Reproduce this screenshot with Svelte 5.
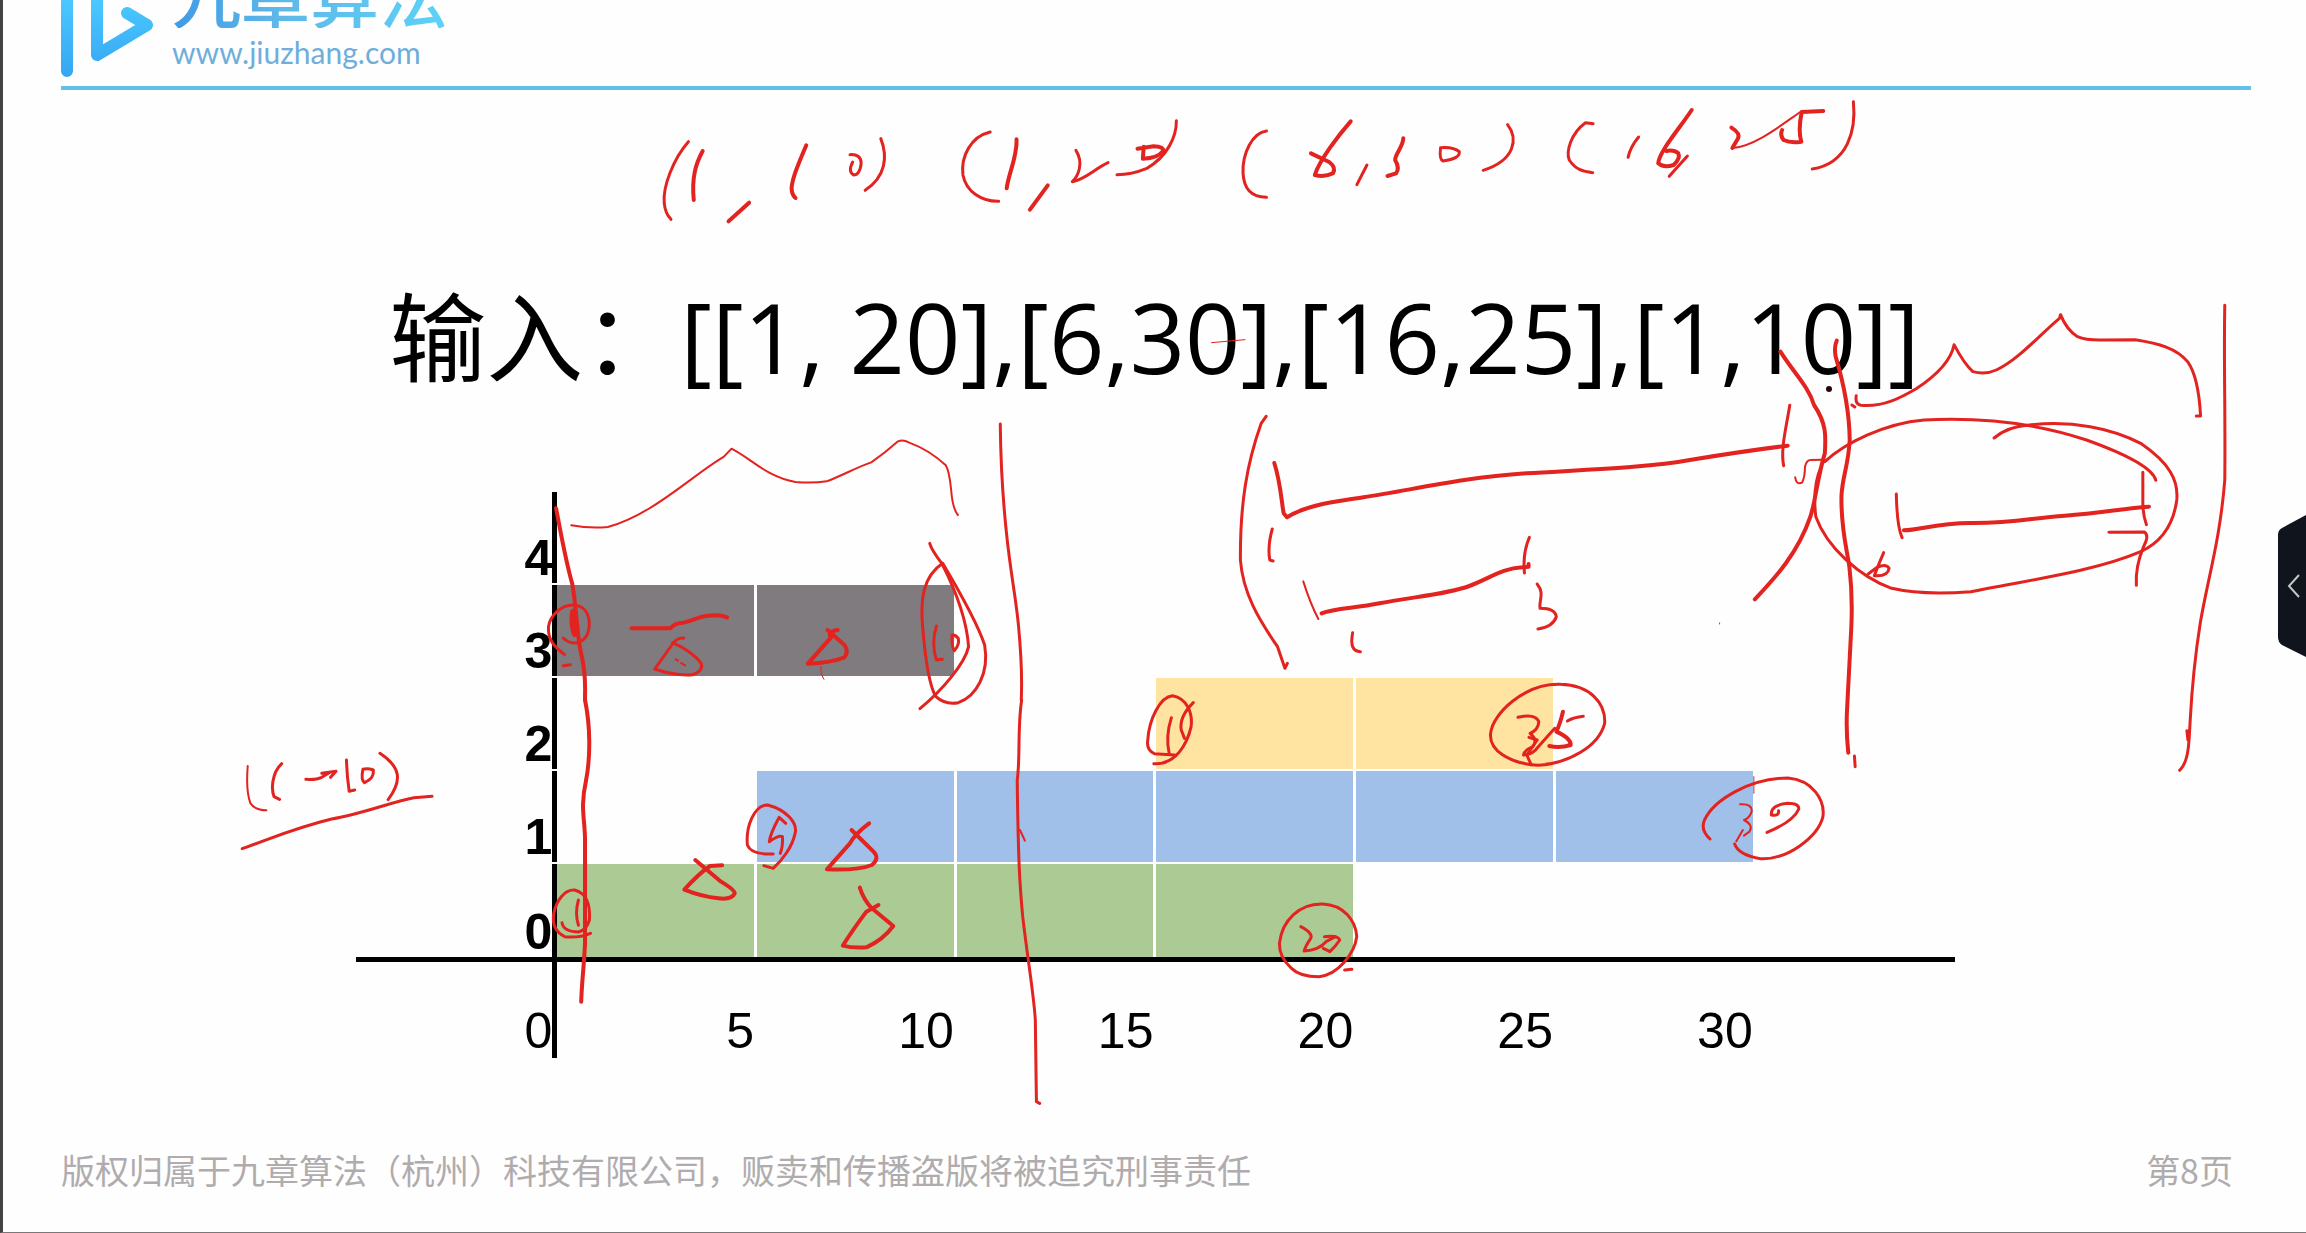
<script>
  const ticks = [5, 10, 15, 20, 25, 30];
  const rows = [
    { label: 4, from: 0, to: 0, tone: 'none' },
    { label: 3, from: 0, to: 10, tone: 'gray' },
    { label: 2, from: 15, to: 25, tone: 'yellow' },
    { label: 1, from: 5, to: 30, tone: 'blue' },
    { label: 0, from: 0, to: 20, tone: 'green' }
  ];
  const toneOf = (row, tick) => (tick > row.from && tick <= row.to ? row.tone : 'none');

  // Pen strokes, grouped by area; each group has its own local coordinate frame.
  const ink = [
    {
      frame: 'translate(600 80) scale(.44643 .33333)',
      strokes: [
        ['M198 185C165 235 140 320 144 370Q146 400 159 418', 3],
        ['M230 213C215 250 205 290 210 360', 4],
        ['M334 368L288 424', 4],
        ['M462 196C445 250 425 310 430 335Q432 348 438 354', 4],
        ['M560 224Q585 222 585 250Q582 285 568 285Q555 275 566 246', 3],
        ['M629 176C645 230 640 290 594 331', 3],
        ['M874 156C830 170 808 230 813 285C820 335 855 365 893 364', 3],
        ['M933 178C935 230 915 280 911 325', 4],
        ['M1003 316L963 389', 4],
        ['M1066 211C1085 250 1070 290 1058 305C1085 300 1110 265 1138 248', 3],
        ['M1204 206L1240 199Q1262 200 1262 212Q1250 235 1216 236L1218 200', 4],
        ['M1291 122C1292 170 1270 230 1225 265Q1190 284 1158 284', 3],
        ['M1370 788L1445 779', 1]
      ]
    },
    {
      frame: 'translate(1200 80) scale(.47832 .33333)',
      strokes: [
        ['M139 153C110 158 88 220 90 280C92 325 105 350 139 352', 3],
        ['M315 124C290 165 250 240 240 285Q260 293 278 280Q285 262 270 246L232 220', 4],
        ['M349 255L328 314', 3],
        ['M425 175C425 200 408 220 408 240Q418 265 410 280L392 288', 4],
        ['M503 203Q500 240 508 243Q545 235 542 215Q530 200 503 203', 3],
        ['M643 134C665 175 660 240 592 271', 3],
        ['M822 131L806 128C775 160 765 215 772 240C785 268 800 275 821 278', 3],
        ['M917 171Q900 200 895 232', 3],
        ['M1028 90C1000 150 960 215 958 250Q970 265 990 255Q1005 235 1000 220Q990 208 975 213', 4],
        ['M1019 228L981 289', 3],
        ['M1111 143Q1130 160 1125 175L1113 204', 4],
        ['M1113 204C1160 200 1220 130 1258 93', 2],
        ['M1303 93L1258 96Q1250 150 1257 185Q1235 190 1220 180Q1212 165 1217 150', 4],
        ['M1366 65C1372 150 1355 250 1280 267', 3]
      ]
    },
    {
      frame: 'translate(340 400) scale(.44643 .33333)',
      strokes: [
        ['M518 376Q560 386 600 381C700 345 790 225 860 170L877 146C920 175 955 230 1020 246Q1060 250 1090 244C1120 230 1160 200 1190 187Q1220 160 1250 124Q1262 118 1275 128Q1320 150 1357 196Q1365 215 1369 270Q1372 325 1384 345', 2],
        ['M484 325C495 400 505 480 520 550C530 620 530 700 540 760C553 830 548 870 549 900', 4],
        ['M503 764C480 740 465 720 467 680C470 650 495 612 525 615C560 620 562 670 555 700C545 730 520 740 500 714', 3],
        ['M522 635Q518 670 526 702', 6],
        ['M500 797L516 794', 3],
        ['M653 685L740 685Q750 668 770 668C790 662 805 650 820 648Q850 642 867 652', 4],
        ['M770 714Q755 712 745 732L705 807Q750 828 790 824Q815 812 809 790Q790 755 745 728', 3],
        ['M752 778L757 782M764 789L773 796', 2],
        ['M1115 690Q1090 695 1100 712L1048 791Q1100 788 1130 772Q1140 755 1130 735L1092 690', 4],
        ['M1077 800Q1077 825 1084 838', 1],
        ['M1321 430Q1325 450 1348 490C1390 600 1405 680 1408 740C1400 790 1350 870 1299 926', 3],
        ['M1350 490C1305 530 1300 600 1305 680C1310 760 1320 860 1335 890Q1355 915 1385 908C1425 890 1455 820 1444 735C1430 680 1390 580 1350 490', 3],
        ['M1336 678C1328 710 1328 750 1336 780L1349 778', 3],
        ['M1371 706Q1370 740 1376 752Q1388 735 1385 715Q1378 703 1371 706', 3],
        ['M1479 72C1480 200 1485 300 1493 400C1502 520 1515 600 1520 680C1527 780 1528 840 1526 900', 3]
      ]
    },
    {
      frame: 'translate(200 700) scale(.54847 .33333)',
      strokes: [
        ['M702 0C712 80 712 170 704 240C692 330 703 360 702 430L702 730C700 800 696 850 695 905', 4],
        ['M1498 0C1490 90 1496 170 1490 240C1492 500 1495 560 1500 650C1510 790 1520 880 1523 960L1525 1205L1531 1210', 3],
        ['M1495 390L1504 422', 2],
        ['M87 198C85 240 85 280 92 310Q100 330 121 331', 2],
        ['M149 191C130 220 130 270 135 290L145 298', 3],
        ['M193 238Q212 240 222 232L238 216M222 220L248 214L238 232', 3],
        ['M267 180Q268 230 272 274L282 270', 3],
        ['M297 208Q293 240 300 248Q318 235 316 210Q305 203 297 208', 3],
        ['M328 160C365 200 370 240 343 299', 3],
        ['M77 446C130 415 170 385 240 357C300 340 350 305 390 293L423 289', 3],
        ['M1045 462Q1005 465 998 435C995 380 1010 315 1035 315C1070 330 1090 370 1085 400C1080 440 1062 480 1045 505L1028 497', 3],
        ['M1068 370L1056 352Q1040 400 1038 425Q1055 405 1062 410Q1063 440 1058 460', 3],
        ['M1220 370Q1195 400 1185 430L1143 508Q1200 512 1225 495Q1240 475 1228 455L1188 390', 4],
        ['M903 480L950 545Q975 570 975 580Q970 600 945 595Q915 590 883 569Q910 520 930 498L952 496', 4],
        ['M712 700Q690 715 665 710Q640 690 645 640C650 600 665 568 683 570C705 580 712 610 710 660Q705 690 690 696Q662 695 660 668', 3],
        ['M690 600Q683 640 690 676', 3],
        ['M1203 563Q1210 600 1225 625L1264 678Q1245 720 1215 742Q1190 745 1172 737Q1190 690 1215 635L1237 615', 4]
      ]
    },
    {
      frame: 'translate(1020 640) scale(.54847 .33333)',
      strokes: [
        ['M282 345L245 341Q230 330 233 300C235 240 255 170 278 167C305 175 315 220 312 260C305 310 285 375 244 371', 3],
        ['M276 233Q265 290 272 340', 3],
        ['M316 188Q290 230 294 270L300 295', 3],
        ['M985 133C1040 135 1068 190 1066 250C1055 320 1000 370 945 376C890 370 855 330 858 280C862 220 920 130 985 133', 3],
        ['M908 232Q940 220 946 245Q945 270 930 280Q945 300 935 320Q920 330 918 345Q935 345 945 320L975 265', 3],
        ['M928 292L943 300L924 345L932 374', 3],
        ['M990 215Q985 250 978 275Q1005 295 1004 315Q985 325 965 318', 4],
        ['M998 243Q1010 232 1027 229', 3],
        ['M1258 597Q1240 570 1248 540C1265 480 1330 415 1400 414C1445 420 1468 480 1464 530C1455 590 1400 660 1350 656Q1310 645 1303 612', 3],
        ['M1313 493Q1335 490 1334 515Q1330 535 1320 540Q1338 555 1330 575L1320 587M1306 604L1318 570', 2],
        ['M1370 525Q1385 528 1383 512M1370 525Q1368 495 1400 490Q1420 490 1420 507Q1410 545 1362 577', 3],
        ['M1338 410V460', 1],
        ['M552 792C590 795 612 840 614 890C610 940 580 1005 545 1010Q510 1010 495 985Q472 950 473 910C478 840 510 790 552 792', 3],
        ['M512 860Q535 880 530 895Q520 920 518 933Q545 930 558 905L575 890', 3],
        ['M555 890Q580 885 583 900Q575 920 565 935L553 925', 3],
        ['M592 990L605 988', 3]
      ]
    },
    {
      frame: 'translate(1200 380) scale(.40816 .33333)',
      strokes: [
        ['M162 109L150 130C115 250 98 370 99 540C105 640 145 720 190 800L208 865L214 850', 3],
        ['M182 249C198 310 200 370 205 400L213 412C260 375 340 362 400 352C520 330 640 293 800 280C960 268 1100 262 1200 240C1300 220 1400 203 1440 197', 4],
        ['M1445 76C1435 150 1422 210 1430 257', 3],
        ['M177 447Q165 500 171 540L179 543', 3],
        ['M253 604Q270 670 290 717', 2],
        ['M298 700C330 685 380 685 440 670C520 650 600 645 660 618C710 595 740 565 790 562L805 560V552', 4],
        ['M807 472Q790 520 795 579', 3],
        ['M374 758Q365 815 393 815', 3],
        ['M826 612C845 640 830 660 833 685Q870 685 873 710Q865 740 828 747', 3],
        ['M1273 729V732', 1]
      ]
    },
    {
      frame: 'translate(1740 280) scale(.36097 .33333)',
      strokes: [
        ['M112 215C150 280 190 320 205 375C240 430 238 470 235 520C215 590 210 660 195 710C160 820 100 890 41 958', 4],
        ['M268 182Q260 200 265 230C290 320 303 400 304 480C300 560 283 590 281 650C280 750 295 800 303 860C313 950 310 1000 308 1050L297 1280Q293 1350 300 1418', 4],
        ['M317 1428L319 1460', 3],
        ['M153 592Q155 615 172 608Q180 590 180 560Q185 540 195 540L225 539', 2],
        ['M310 375L318 381M322 347Q318 372 335 376C400 382 450 350 490 325C545 285 585 240 593 194Q620 250 645 275Q680 285 710 270C770 240 830 165 885 115L888 104Q905 150 935 170Q960 182 1010 180L1095 179C1160 190 1210 205 1240 245Q1270 290 1276 408L1264 408', 3],
        ['M235 545C290 490 400 430 510 420C700 410 850 440 960 480Q1140 550 1152 601', 3],
        ['M704 474Q740 440 800 435C920 420 1030 445 1110 490C1190 550 1215 600 1210 660C1200 740 1160 790 1110 815C980 875 800 900 640 935C560 942 480 940 420 925C330 890 240 800 210 710Q200 620 225 560', 3],
        ['M433 642Q435 740 449 773', 3],
        ['M454 751C500 750 540 730 640 729C760 730 800 715 900 707C1000 700 1060 685 1133 680', 4],
        ['M1116 577V680Q1118 710 1126 734', 3],
        ['M1022 757L1120 756Q1135 765 1118 800Q1095 860 1098 916', 3],
        ['M398 818Q385 850 372 887Q410 890 413 865Q405 850 380 862L355 882', 3],
        ['M1343 76C1340 250 1345 400 1343 600C1330 780 1295 900 1275 1030C1250 1200 1250 1280 1244 1380Q1240 1450 1218 1471M1238 1352L1241 1380', 3]
      ]
    }
  ];
</script>

<div class="page">
  <main class="slide">
    <header>
      <svg class="mark" viewBox="0 0 96 80" aria-hidden="true">
        <defs>
          <linearGradient id="mark-fill" gradientUnits="userSpaceOnUse" x1="0" y1="0" x2="0" y2="80">
            <stop offset="0" stop-color="#4ac8ff" />
            <stop offset="1" stop-color="#35a4f2" />
          </linearGradient>
        </defs>
        <path d="M6 -10V71M36 -10V55L86 25L66 13" />
      </svg>
      <div class="brand">
        <span class="name">九章算法</span>
        <a href="http://www.jiuzhang.com">www.jiuzhang.com</a>
      </div>
    </header>

    <h1>输入：[[1, 20],[6,30],[16,25],[1,10]]</h1>

    <section class="chart" aria-label="区间图">
      {#each rows as row}
        <div class="row">
          <div class="y-label">{row.label}</div>
          {#each ticks as tick}
            <div class="cell {toneOf(row, tick)}"></div>
          {/each}
        </div>
      {/each}
      <div class="x-axis"></div>
      <div class="row x-labels">
        <div class="origin">0</div>
        {#each ticks as tick}
          <div class="x-label">{tick}</div>
        {/each}
      </div>
    </section>

    <footer>
      <span>版权归属于九章算法（杭州）科技有限公司，贩卖和传播盗版将被追究刑事责任</span>
      <span>第8页</span>
    </footer>
  </main>

  <svg class="ink" viewBox="0 0 2306 1233" preserveAspectRatio="none" aria-hidden="true">
    {#each ink as group}
      <g transform={group.frame}>
        {#each group.strokes as [d, width]}
          <path {d} stroke-width={width} />
        {/each}
      </g>
    {/each}
    <circle cx="1829" cy="389" r="3" />
  </svg>

  <button class="drawer" type="button" aria-label="展开侧栏">
    <svg viewBox="0 0 28 142" aria-hidden="true">
      <path class="tab" d="M28 0L4 13Q0 15 0 20V122Q0 127 4 130L28 142Z" />
      <path class="chevron" d="M21 60L11 71L21 82" />
    </svg>
  </button>
</div>

<style>
  :global(body) {
    margin: 0;
    background: #fff;
  }

  .page {
    position: relative;
    overflow: hidden;
  }

  .slide {
    box-sizing: border-box;
    display: flex;
    flex-direction: column;
    min-height: 100vh;
    border-left: 3px solid #454346;
    border-bottom: 1px solid #7b787a;
    background: #fefefe;
    color: #000;
    font-family: 'Open Sans', 'Noto Sans CJK SC', sans-serif;
  }

  header {
    box-sizing: border-box;
    display: flex;
    align-items: flex-end;
    gap: 15px;
    height: 90px;
    margin: 0 55px 0 58px;
    padding-bottom: 6px;
    border-bottom: 4px solid #62c0e8;
  }

  .mark {
    width: 96px;
    height: 80px;
  }

  .mark path {
    fill: none;
    stroke: url(#mark-fill);
    stroke-width: 12;
    stroke-linecap: round;
    stroke-linejoin: round;
  }

  .brand {
    display: flex;
    flex-direction: column;
    gap: 4px;
    padding-bottom: 8px;
  }

  .name {
    background: linear-gradient(90deg, #3f9ae6, #5fb9e8 40%, #5cd2f7);
    background-clip: text;
    color: transparent;
    font: 500 69px/70px 'Noto Sans CJK SC', sans-serif;
  }

  .brand a {
    color: #6faedb;
    font: 30px/40px Lato, sans-serif;
    text-decoration: none;
  }

  h1 {
    margin: 176px 0 86px;
    font-size: 97px;
    font-weight: 400;
    line-height: 140px;
    text-align: center;
    white-space: nowrap;
  }

  .row {
    display: grid;
    grid-template-columns: 555fr repeat(6, 200fr) 551fr;
    height: 93px;
  }

  .chart {
    font: 50px/50px 'Liberation Sans', sans-serif;
  }

  .y-label,
  .origin {
    box-sizing: border-box;
    display: flex;
    align-items: flex-end;
    justify-content: flex-end;
    border-right: 5px solid #000;
    text-align: right;
  }

  .y-label {
    margin-bottom: 2px;
    font-weight: 700;
  }

  .cell {
    margin: 0 3px 2px 0;
  }

  .row:nth-child(5) > * {
    margin-bottom: 0;
  }

  .gray { background: #7f7b7f; }
  .yellow { background: #ffe4a1; }
  .blue { background: #a0bfe9; }
  .green { background: #accb94; }

  .x-axis {
    height: 5px;
    margin: 0 351px 0 353px;
    background: #000;
  }

  .x-labels {
    height: 96px;
  }

  .origin {
    padding-bottom: 2px;
  }

  .x-label {
    align-self: end;
    padding: 0 3px 2px 0;
    text-align: right;
  }

  footer {
    display: flex;
    justify-content: space-between;
    margin: auto 73px 0 58px;
    padding-bottom: 37px;
    color: #b0acae;
    font: 34px/50px 'Noto Sans CJK SC', sans-serif;
  }

  .ink {
    position: absolute;
    inset: 0;
    width: 100%;
    height: 100%;
    pointer-events: none;
  }

  .ink path {
    fill: none;
    stroke: #e2231f;
    stroke-linecap: round;
    stroke-linejoin: round;
    vector-effect: non-scaling-stroke;
  }

  .ink circle {
    fill: #2a0608;
  }

  .drawer {
    position: absolute;
    top: 515px;
    right: 0;
    width: 28px;
    height: 142px;
    padding: 0;
    border: 0;
    background: none;
    cursor: pointer;
  }

  .drawer svg {
    display: block;
    width: 100%;
    height: 100%;
  }

  .tab {
    fill: #0f141d;
  }

  .chevron {
    fill: none;
    stroke: #c3c5c8;
    stroke-width: 2;
  }
</style>
